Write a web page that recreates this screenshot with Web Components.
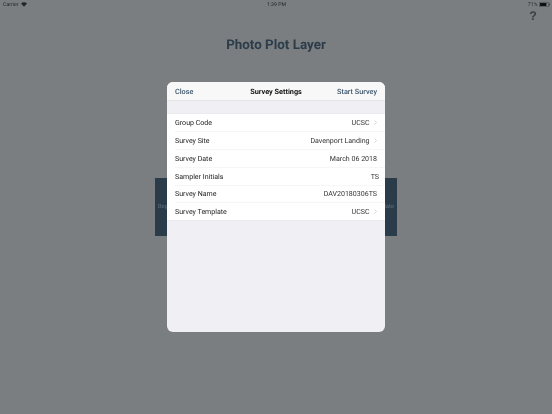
<!DOCTYPE html>
<html>
<head>
<meta charset="utf-8">
<style>
html, body { margin: 0; padding: 0; width: 552px; height: 414px; overflow: hidden; background: #7a7e81; font-family: Roboto, "Liberation Sans", Arial, sans-serif; text-rendering: geometricPrecision; }
</style>
</head>
<body>
<plot-screen>
  <status-bar slot="status"></status-bar>
  <survey-modal slot="modal" heading="Survey Settings" left="Close" right="Start Survey">
    <setting-row label="Group Code" value="UCSC" chevron></setting-row>
    <setting-row label="Survey Site" value="Davenport Landing" chevron></setting-row>
    <setting-row label="Survey Date" value="March 06 2018"></setting-row>
    <setting-row label="Sampler Initials" value="TS" flush></setting-row>
    <setting-row label="Survey Name" value="DAV20180306TS"></setting-row>
    <setting-row label="Survey Template" value="UCSC" chevron last></setting-row>
  </survey-modal>
</plot-screen>
<script>
class StatusBar extends HTMLElement {
    constructor() {
        super();
        this.attachShadow({mode: 'open'});
        this.shadowRoot.innerHTML = `
<style>
:host { display: grid; grid-template-columns: 1fr auto 1fr; align-items: center; height: 9px; padding: 0 2px 0 3px; font-size: 5.2px; color: #26292b; }
.left { display: flex; align-items: center; gap: 3px; }
.right { display: flex; align-items: center; justify-content: flex-end; gap: 1.5px; }
svg { display: block; }
</style>
<div class="left">Carrier
<svg width="6" height="5" viewBox="0 0 8 6"><path d="M0 1.6C2.3-.5 5.7-.5 8 1.6L4 6z" fill="#232628"/></svg>
</div>
<div>1:39 PM</div>
<div class="right">71%
<svg width="11" height="5" viewBox="0 0 11 5"><rect x=".25" y=".25" width="9.5" height="4.5" rx="1" fill="none" stroke="#2b2e30" stroke-width=".5"/><rect x="1" y="1" width="6.4" height="3" fill="#111"/><rect x="10.1" y="1.6" width=".7" height="1.8" fill="#2b2e30"/></svg>
</div>`;
    }
}
customElements.define('status-bar', StatusBar);

class PlotScreen extends HTMLElement {
    constructor() {
        super();
        this.attachShadow({mode: 'open'});
        this.shadowRoot.innerHTML = `
<style>
:host { display: flex; flex-direction: column; position: relative; width: 552px; height: 414px; background: #7a7e81; filter: blur(.2px); }
.help { align-self: flex-end; margin: 1px 15px 0 0; height: 12px; font-family: "Liberation Sans", sans-serif; font-size: 12.5px; line-height: 12px; font-weight: bold; color: #3c4044; }
h1 { margin: 16px 0 0; font-size: 13.4px; line-height: 16px; font-weight: 700; text-align: center; color: #2d3c49; }
.band { display: flex; justify-content: space-between; align-items: center; box-sizing: border-box; margin: 124px 155px 0; height: 58px; padding: 0 3px; background: #2a3b49; font-size: 5.8px; color: #66727b; }
.overlay { position: absolute; left: 167px; top: 82px; }
</style>
<slot name="status"></slot>
<div class="help">?</div>
<h1>Photo Plot Layer</h1>
<div class="band"><span>Begin</span><span>Update</span></div>
<div class="overlay"><slot name="modal"></slot></div>`;
    }
}
customElements.define('plot-screen', PlotScreen);

class SurveyModal extends HTMLElement {
    constructor() {
        super();
        this.attachShadow({mode: 'open'});
        this.shadowRoot.innerHTML = `
<style>
:host { display: flex; flex-direction: column; width: 218px; height: 250px; border-radius: 6px; overflow: hidden; background: #efeff4; }
header { display: grid; grid-template-columns: 1fr auto 1fr; align-items: center; box-sizing: border-box; height: 17.5px; padding: 1px 8px 0; background: #f8f8f8; box-shadow: 0 .5px 0 #dcdcde; font-size: 7.3px; }
.side { color: #3d566b; font-weight: 500; }
.side.end { text-align: right; }
.title { font-weight: 700; color: #111; }
.list { margin-top: 14px; background: #fff; box-shadow: 0 -.5px 0 #e6e6ea, 0 .5px 0 #e6e6ea; }
</style>
<header>
  <span class="side"></span>
  <span class="title"></span>
  <span class="side end"></span>
</header>
<div class="list"><slot></slot></div>`;
    }
    connectedCallback() {
        const spans = this.shadowRoot.querySelectorAll('header span');
        spans[0].textContent = this.getAttribute('left');
        spans[1].textContent = this.getAttribute('heading');
        spans[2].textContent = this.getAttribute('right');
    }
}
customElements.define('survey-modal', SurveyModal);

class SettingRow extends HTMLElement {
    constructor() {
        super();
        this.attachShadow({mode: 'open'});
        this.shadowRoot.innerHTML = `
<style>
:host { display: flex; align-items: center; justify-content: space-between; box-sizing: border-box; height: 17.75px; margin-left: 8px; padding: 1px 8px 0 0; box-shadow: 0 .5px 0 #ededf0; font-size: 7.05px; color: #1c1c1e; }
:host([last]) { box-shadow: none; }
:host([flush]) { padding-right: 6px; }
.value { display: flex; align-items: center; gap: 4.5px; color: #333; }
svg { display: block; }
</style>
<span class="label"></span>
<span class="value"><span class="text"></span></span>`;
    }
    connectedCallback() {
        this.shadowRoot.querySelector('.label').textContent = this.getAttribute('label');
        this.shadowRoot.querySelector('.text').textContent = this.getAttribute('value');
        if (this.hasAttribute('chevron')) {
            this.shadowRoot.querySelector('.value').insertAdjacentHTML('beforeend',
                '<svg width="3" height="5" viewBox="0 0 3 5"><path d="M.4.4 2.5 2.5.4 4.6" fill="none" stroke="#c7c7cc" stroke-width=".7"/></svg>');
        }
    }
}
customElements.define('setting-row', SettingRow);
</script>
</body>
</html>
